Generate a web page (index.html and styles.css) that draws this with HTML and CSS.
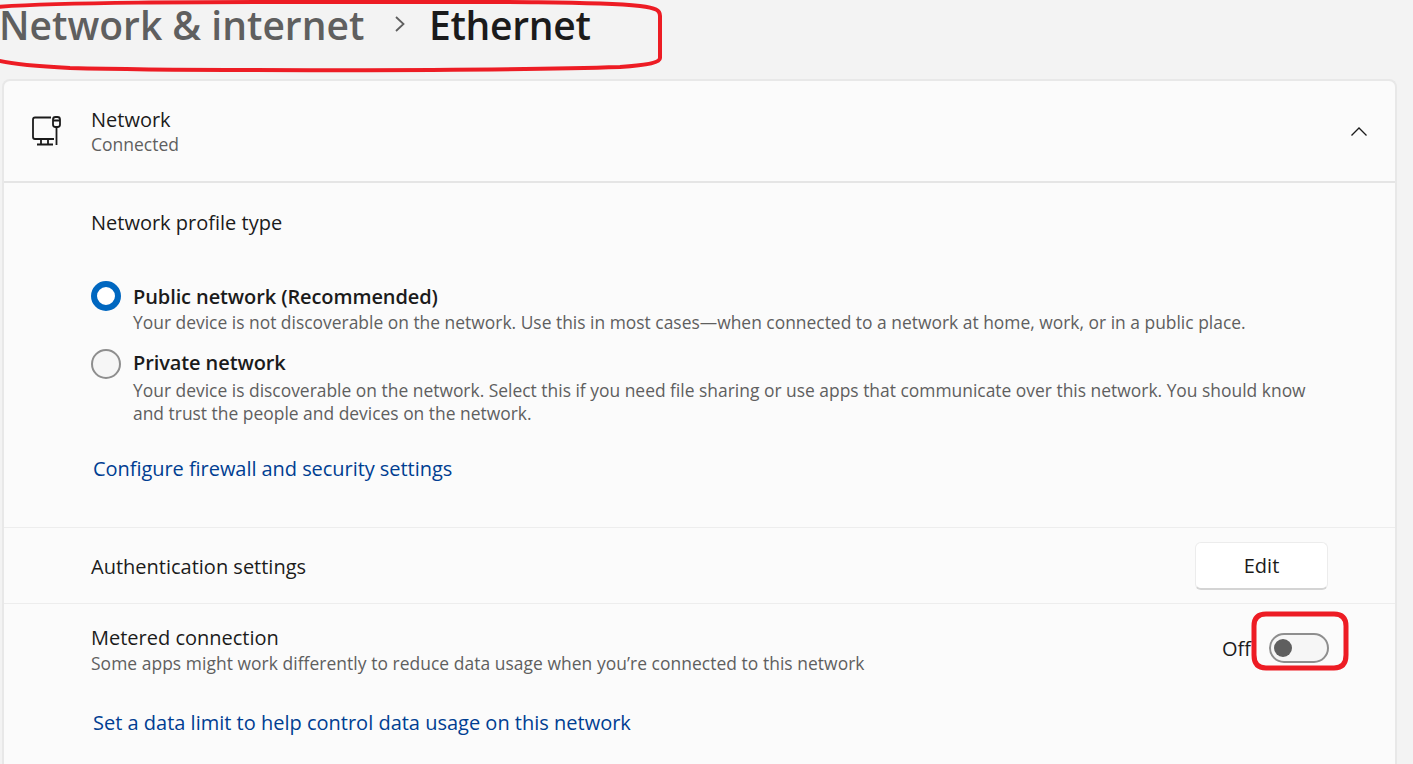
FILE: index.html
```html
<!DOCTYPE html>
<html lang="en">
<head>
  <meta charset="UTF-8">
  <title>Ethernet</title>
  <link rel="stylesheet" href="styles.css">
</head>
<body>
  <header class="crumbs">
    <span class="crumb-parent">Network &amp; internet</span>
    <svg class="crumb-sep" width="14" height="18" viewBox="0 0 14 18"><path d="M3 2 L10.500 9 L3 16" fill="none" stroke="#5f5f5f" stroke-width="1.800"/></svg>
    <span class="crumb-current">Ethernet</span>
  </header>

  <main class="card">
    <div class="card-head">
      <svg class="net-icon" width="32" height="32" viewBox="0 0 32 32" fill="none" stroke="#1b1b1b" stroke-width="1.800">
        <path d="M21 2.500 H5 Q3 2.500 3 4.500 V22 Q3 24 5 24 H24"/>
        <path d="M11 24 V29 M18 24 V29 M7 29.500 H23"/>
        <rect x="23" y="2" width="7" height="10" rx="2.500"/>
        <path d="M23 5.500 H30 M26.500 12 V30"/>
      </svg>
      <div class="head-text">
        <div class="head-title">Network</div>
        <div class="head-sub">Connected</div>
      </div>
      <svg class="chevron" width="16" height="9" viewBox="0 0 16 9"><path d="M0.500 8.500 L8 1 L15.500 8.500" fill="none" stroke="#1b1b1b" stroke-width="1.300"/></svg>
    </div>

    <section class="profile">
      <div class="profile-label">Network profile type</div>
      <div class="option">
        <span class="radio radio-on"></span>
        <div>
          <div class="option-title">Public network (Recommended)</div>
          <div class="desc">Your device is not discoverable on the network. Use this in most cases—when connected to a network at home, work, or in a public place.</div>
        </div>
      </div>
      <div class="option option-private">
        <span class="radio"></span>
        <div>
          <div class="option-title">Private network</div>
          <div class="desc desc-wrap">Your device is discoverable on the network. Select this if you need file sharing or use apps that communicate over this network. You should know and trust the people and devices on the network.</div>
        </div>
      </div>
      <a class="link link-firewall" href="#">Configure firewall and security settings</a>
    </section>

    <div class="row row-auth">
      <span class="row-title auth-title">Authentication settings</span>
      <button class="btn">Edit</button>
    </div>

    <div class="row row-metered">
      <div class="metered-text">
        <div class="row-title metered-title">Metered connection</div>
        <div class="desc metered-desc">Some apps might work differently to reduce data usage when you’re connected to this network</div>
      </div>
      <div class="toggle-wrap">
        <span class="toggle-label">Off</span>
        <span class="toggle"><span class="knob"></span></span>
      </div>
    </div>

    <div class="limit">
      <a class="link" href="#">Set a data limit to help control data usage on this network</a>
    </div>
  </main>

  <!-- red marks drawn over the screenshot -->
  <svg class="marks" width="1413" height="764" viewBox="0 0 1413 764" fill="none" stroke="#ed1c24" stroke-width="4">
    <path d="M-4 7 C60 2 200 2 330 2 C460 2 590 1 640 6 C656 8 660 10 660 16 V58 C660 62 650 65 620 67 C500 71 180 71 70 68 C30 66 6 63 -4 60"/>
    <path stroke-width="5" d="M1266 614 H1334 Q1346 614 1346 626 V655 Q1346 668 1334 668 H1266 Q1254 668 1254 655 V626 Q1254 614 1266 614 Z"/>
  </svg>
</body>
</html>
```

FILE: styles.css
```css
html, body { height: 100%; }
body {
  margin: 0;
  background: #f3f3f3;
  font-family: 'Open Sans', 'Noto Sans', 'Liberation Sans', sans-serif;
  color: #1b1b1b;
  overflow: hidden;
  position: relative;
}

.crumbs {
  height: 79px;
  display: flex;
  align-items: flex-start;
  box-sizing: border-box;
  margin-left: -1px;
  font-size: 39px;
  font-weight: 600;
  line-height: 50px;
}
.crumb-parent { color: #5f5f5f; width: 394px; white-space: nowrap; }
.crumb-sep { margin-top: 15px; width: 14px; }
.crumb-current { margin-left: 22px; white-space: nowrap; letter-spacing: -0.3px; }

.card {
  margin-left: 2px;
  width: 1395px;
  box-sizing: border-box;
  background: #fbfbfb;
  border: 2px solid #e8e8e8;
  border-bottom: 0;
  border-radius: 8px 8px 0 0;
}

.card-head {
  height: 102px;
  box-sizing: border-box;
  border-bottom: 2px solid #e5e5e5;
  display: flex;
  align-items: center;
  padding: 0 28px 0 26px;
}
.net-icon { margin-right: 29px; }
.head-text { flex: 1; }
.head-title { font-size: 20px; line-height: 26px; padding-top: 1px; }
.head-sub { font-size: 17.5px; line-height: 23px; color: #5f5f5f; }

.profile {
  padding: 27px 0 45px 87px;
  border-bottom: 1px solid #ededed;
}
.profile-label { font-size: 20px; line-height: 26px; margin-bottom: 48px; }

.option { display: flex; gap: 12px; }
.option-private { margin-top: 16px; }
.option-title { font-size: 20px; font-weight: 600; line-height: 26px; margin-bottom: 1px; letter-spacing: -0.1px; }
.option-private .option-title { margin-bottom: 3px; }
.desc { font-size: 17.43px; line-height: 23px; color: #5f5f5f; white-space: nowrap; }
.desc-wrap { white-space: normal; width: 1180px; }
.metered-desc { letter-spacing: 0.05px; }

.radio {
  width: 30px;
  height: 30px;
  box-sizing: border-box;
  flex: none;
  margin-top: -3px;
  border-radius: 50%;
  border: 2px solid #8e8e8e;
  background: #f6f6f6;
}
.option-private .radio { margin-top: -1px; }
.radio-on { border: 6.5px solid #0067c0; background: #fff; }

.link { color: #003e92; font-size: 20px; line-height: 26px; text-decoration: none; }
.link-firewall { display: block; margin: 31px 0 0 2px; letter-spacing: -0.05px; }

.row {
  display: flex;
  justify-content: space-between;
  align-items: center;
  padding: 0 66px 0 87px;
}
.row-title { font-size: 20px; line-height: 26px; }
.auth-title { margin-top: 2px; }
.metered-text { margin-top: 4px; }
.metered-title { margin-bottom: 1px; }
.row-auth { height: 76px; box-sizing: border-box; padding-top: 1px; border-bottom: 1px solid #ededed; }
.row-metered { height: 88px; }

.btn {
  width: 133px;
  height: 48px;
  margin-right: 1px;
  background: #fff;
  border: 1px solid #ececec;
  border-bottom: 2px solid #d4d4d4;
  border-radius: 6px;
  font: 20px 'Open Sans', sans-serif;
  color: #1b1b1b;
}

.toggle-wrap { display: flex; align-items: center; gap: 18px; }
.toggle-label { font-size: 20px; }
.toggle {
  width: 60px;
  height: 30px;
  box-sizing: border-box;
  border: 2px solid #8e8e8e;
  border-radius: 15px;
  background: #f6f6f6;
  display: flex;
  align-items: center;
  padding-left: 3px;
}
.knob { width: 18px; height: 18px; border-radius: 50%; background: #5f5f5f; }

.limit { padding: 18px 0 0 89px; height: 60px; }

.marks { position: absolute; left: 0; top: 0; pointer-events: none; }
```
